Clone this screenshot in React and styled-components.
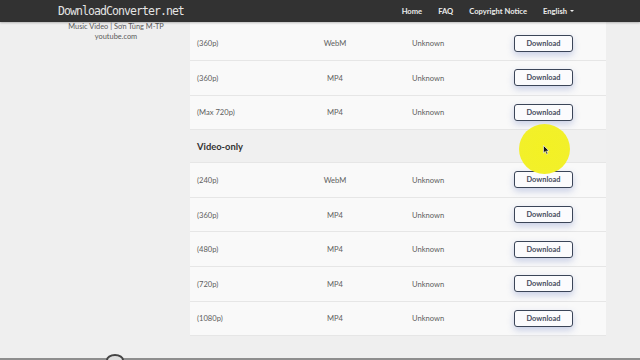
import React from "react";
import styled, { createGlobalStyle } from "styled-components";

const Global = createGlobalStyle`
  html, body { margin: 0; padding: 0; background: #efefef; }
  body { font-family: "Lato", "Noto Sans", sans-serif; overflow: hidden; }
  * { box-sizing: border-box; }
`;

const Page = styled.div`
  width: 640px;
  height: 360px;
  position: relative;
  overflow: hidden;
  background: #efefef;
  display: flex;
  flex-direction: column;
`;

const Nav = styled.header`
  height: 22px;
  flex: none;
  background: #323232;
  display: flex;
  align-items: center;
  padding: 0 0 0 58px;
  position: relative;
  z-index: 2;
  box-shadow: 0 1px 2px rgba(0,0,0,0.25);
`;

const Logo = styled.div`
  font-family: "DejaVu Sans Mono", "Liberation Mono", monospace;
  font-size: 11.5px;
  letter-spacing: -0.93px;
  color: #e4e4e4;
  margin-top: -1px;
`;

const Links = styled.nav`
  margin-left: auto;
  margin-right: 66px;
  display: flex;
  gap: 16px;
  align-items: center;
`;

const Link = styled.span`
  font-size: 7.6px;
  font-weight: 700;
  color: #ececec;
  display: flex;
  align-items: center;
  gap: 3px;
`;

const Caret = styled.span`
  width: 0;
  height: 0;
  border-left: 2.5px solid transparent;
  border-right: 2.5px solid transparent;
  border-top: 2.5px solid #ececec;
`;

const Viewport = styled.main`
  flex: 1;
  overflow: hidden;
  position: relative;
  border-bottom: 2px solid #8e8e8e;
`;

const Scroll = styled.div`
  display: grid;
  grid-template-columns: 190px 416px 1fr;
  align-items: start;
`;

const Side = styled.aside`
  padding-top: 0;
  text-align: center;
  color: #595959;
  font-size: 7.4px;
  line-height: 10px;
  padding-left: 42px;
`;

const Table = styled.section`
  display: flex;
  flex-direction: column;
  padding-top: 4.4px;
  background: #f9f9f9;
`;

const Row = styled.div`
  height: 34.6px;
  background: #f9f9f9;
  border-bottom: 1px solid #e6e6e6;
  display: grid;
  grid-template-columns: 110px 56px 151px 59px;
  align-items: center;
  padding-left: 7px;
  font-size: 7.6px;
  color: #5e5e5e;
`;

const Format = styled.span`
  text-align: center;
`;

const Size = styled.span`
  padding-left: 49px;
`;

const Header = styled.div`
  height: 33px;
  background: #f0f0f0;
  display: flex;
  align-items: center;
  padding-left: 7px;
  font-size: 9.4px;
  font-weight: 700;
  color: #333;
  border-bottom: 1px solid #e6e6e6;
`;

const Button = styled.button`
  width: 59px;
  height: 17px;
  border: 1.4px solid #3b4558;
  border-radius: 3px;
  background: #fbfbfd;
  color: #454b5c;
  font-family: "Lato", "Noto Sans", sans-serif;
  font-size: 7.4px;
  font-weight: 700;
  padding: 0;
  box-shadow: 0 3px 7px rgba(70, 95, 180, 0.28);
`;

const Highlight = styled.div`
  position: absolute;
  left: 519px;
  top: 124px;
  width: 51px;
  height: 50px;
  border-radius: 50%;
  background: radial-gradient(circle, #f3f124 0%, #f2f02a 75%, rgba(242,240,42,0.55) 100%);
  z-index: 3;
`;

const Cursor = styled.svg`
  position: absolute;
  left: 543px;
  top: 145px;
  z-index: 4;
`;

const Knob = styled.div`
  position: absolute;
  left: 106px;
  top: 354px;
  width: 18px;
  height: 12px;
  border-radius: 50%;
  border: 2px solid #444;
  background: #ddd;
  z-index: 4;
`;

const top = [
  ["(360p)", "WebM"],
  ["(360p)", "MP4"],
  ["(Max 720p)", "MP4"],
];
const video = [
  ["(240p)", "WebM"],
  ["(360p)", "MP4"],
  ["(480p)", "MP4"],
  ["(720p)", "MP4"],
  ["(1080p)", "MP4"],
];

const DataRow = ({ res, fmt }) => (
  <Row>
    <span>{res}</span>
    <Format>{fmt}</Format>
    <Size>Unknown</Size>
    <Button>Download</Button>
  </Row>
);

export default function App() {
  return (
    <Page>
      <Global />
      <Nav>
        <Logo>DownloadConverter.net</Logo>
        <Links>
          <Link>Home</Link>
          <Link>FAQ</Link>
          <Link>Copyright Notice</Link>
          <Link>English<Caret /></Link>
        </Links>
      </Nav>
      <Viewport>
        <Scroll>
          <Side>
            <div>Music Video | Sơn Tùng M-TP</div>
            <div>youtube.com</div>
          </Side>
          <Table>
            {top.map(([r, f], i) => <DataRow key={i} res={r} fmt={f} />)}
            <Header>Video-only</Header>
            {video.map(([r, f], i) => <DataRow key={i} res={r} fmt={f} />)}
          </Table>
          <div />
        </Scroll>
      </Viewport>
      <Highlight />
      <Cursor width="7" height="10" viewBox="0 0 7 10">
        <path d="M0.5 0.5 L0.5 8 L2.3 6.3 L3.6 9.3 L4.8 8.8 L3.6 5.9 L6 5.9 Z" fill="#111" stroke="#fff" strokeWidth="0.6" />
      </Cursor>
      <Knob />
    </Page>
  );
}
